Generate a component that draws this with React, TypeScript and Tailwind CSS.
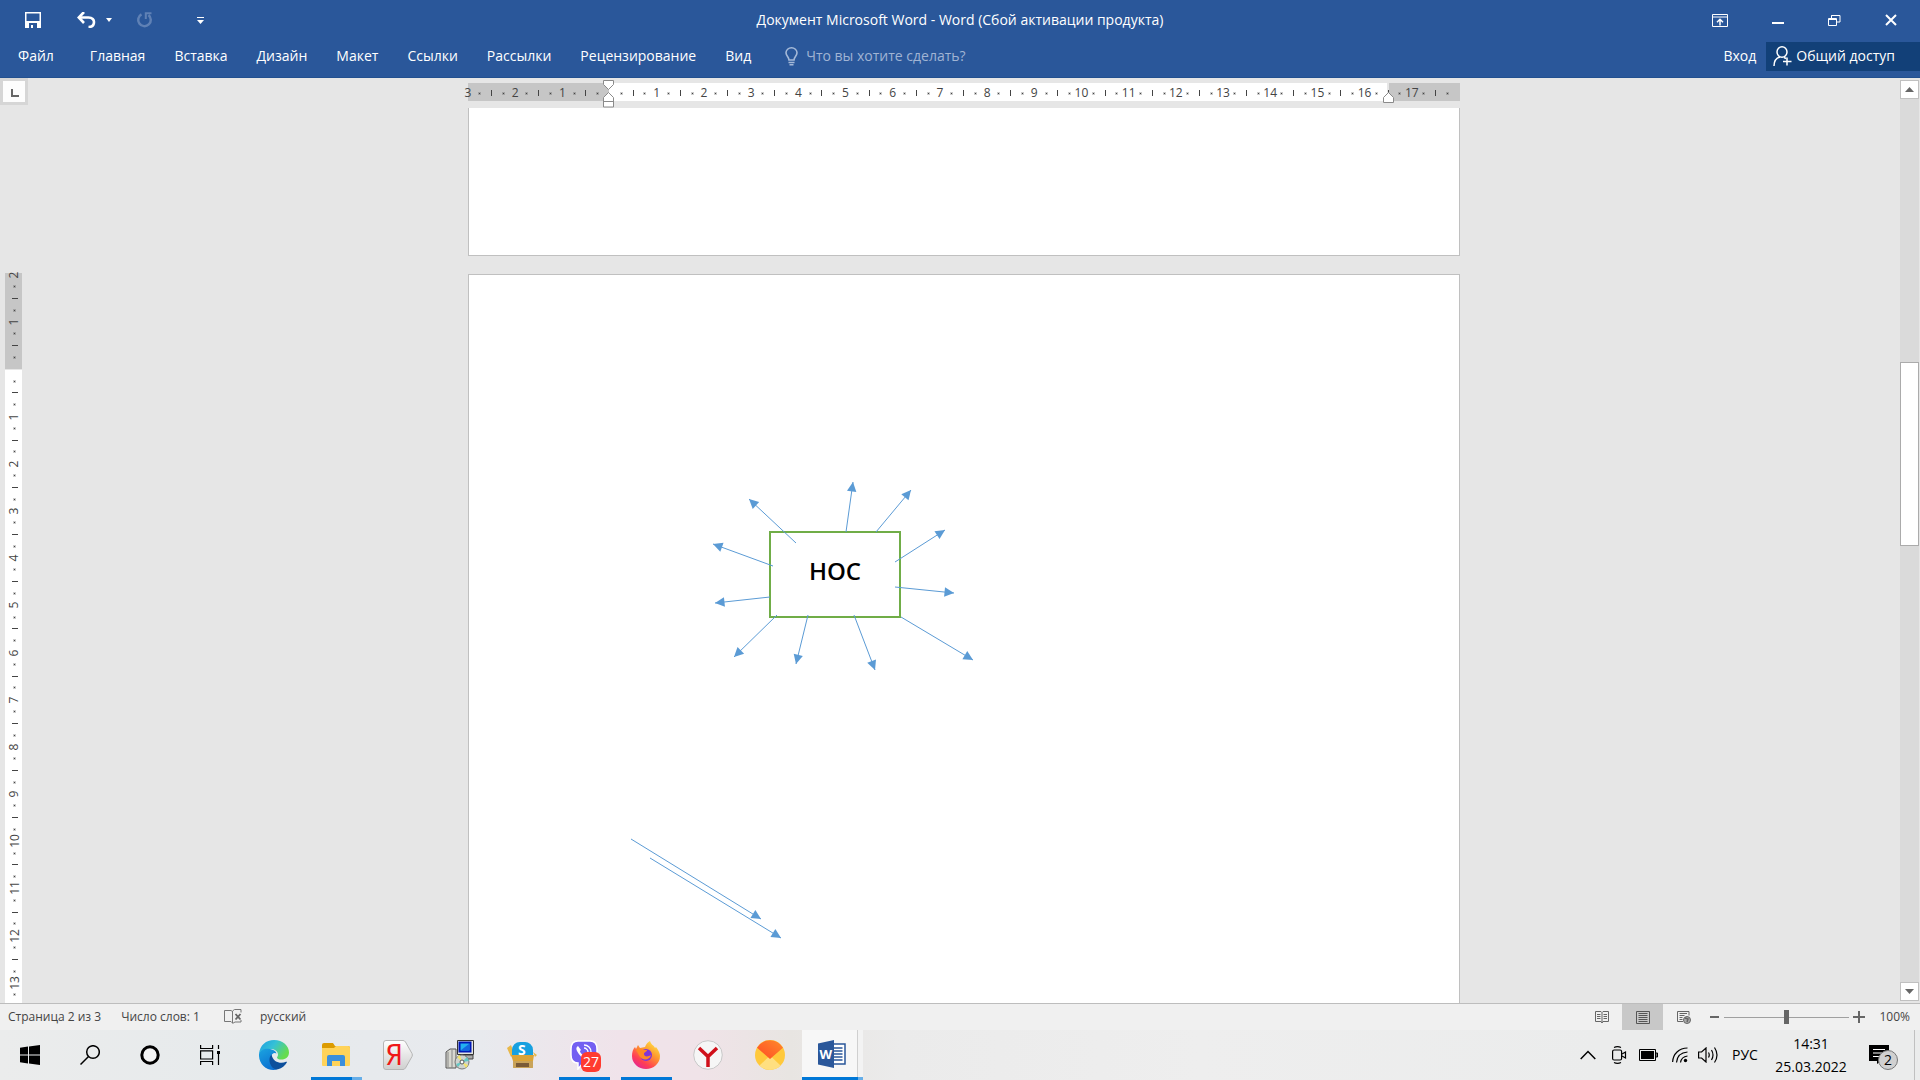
import { useState, type ReactNode } from "react";

type Tick = { kind: "label" | "dot" | "line" | "none"; text?: string };

type Arrow = { from: [number, number]; to: [number, number] };

const TABS = ["Главная", "Вставка", "Дизайн", "Макет", "Ссылки", "Рассылки", "Рецензирование", "Вид"];

const ARROWS: Arrow[] = [
  { from: [327, 268], to: [280, 224] },
  { from: [304, 291], to: [244, 269] },
  { from: [301, 322], to: [246, 328] },
  { from: [308, 340], to: [265, 382] },
  { from: [339, 340], to: [327, 389] },
  { from: [385, 340], to: [406, 395] },
  { from: [432, 342], to: [504, 385] },
  { from: [426, 312], to: [485, 318] },
  { from: [426, 287], to: [476, 255] },
  { from: [407, 257], to: [442, 215] },
  { from: [377, 257], to: [384, 207] },
  { from: [162, 564], to: [292, 644] },
  { from: [181, 583], to: [312, 663] },
];

// one tick for each quarter of a centimetre
function buildTicks(before: number, total: number): Tick[] {
  return Array.from({ length: total * 4 + 1 }, (_, i) => {
    const quarter = i - before * 4;
    if (quarter === 0 || i === total * 4) return { kind: "none" };
    if (quarter % 4 === 0) return { kind: "label", text: String(Math.abs(quarter / 4)) };
    return { kind: quarter % 2 === 0 ? "line" : "dot" };
  });
}

const H_TICKS = buildTicks(3, 21);
const V_TICKS = buildTicks(2, 15.5);

export default function App() {
  return (
    <div className="flex h-screen flex-col overflow-hidden bg-[#e6e6e6] font-['Open_Sans','Noto_Sans',sans-serif]">
      <Header />
      <Workspace />
      <StatusBar />
      <Taskbar />
    </div>
  );
}

function Header() {
  return (
    <header className="h-[78px] shrink-0 border-b border-[#22508f] bg-[#2a579a] text-sm text-white">
      <div className="grid h-10 grid-cols-[1fr_auto_1fr] items-center">
        <div className="flex items-center pl-[25px]">
          <button aria-label="Сохранить">
            <svg width="16" height="16" viewBox="0 0 16 16">
              <path d="M0 0h16v16H0z M1.5 1.5v7.5h13V1.5z M4 11v5h2v-3h2v3h4v-5z" fill="#fff" fillRule="evenodd" />
            </svg>
          </button>
          <button aria-label="Отменить" className="ml-9">
            <svg width="19" height="16" viewBox="0 0 19 16" fill="none">
              <path d="M2 5.5h9.5c4 0 5.5 2.500 5.500 4.500 0 3-2 5-5.500 5" stroke="#fff" strokeWidth="2.600" />
              <path d="M7 0L1.800 5.500L7 11" stroke="#fff" strokeWidth="2.600" />
            </svg>
          </button>
          <button aria-label="Список отмены" className="ml-2.5">
            <svg width="6" height="4" viewBox="0 0 6 4"><path d="M0 0h6L3 4z" fill="#fff" /></svg>
          </button>
          <button aria-label="Повторить" className="ml-6">
            <svg width="17" height="16" viewBox="0 0 17 16" fill="none" stroke="#5f81b5" strokeWidth="2.500">
              <path d="M5.500 2.300A6.300 6.300 0 1 0 12.500 3" />
              <path d="M15.500 1.300H9.800V7" strokeWidth="2" />
            </svg>
          </button>
          <button aria-label="Настройка панели" className="ml-11">
            <svg width="7" height="7" viewBox="0 0 7 7" fill="#fff"><path d="M0 0h7v1H0z M0 3h7L3.500 7z" /></svg>
          </button>
        </div>
        <h1 className="text-sm">Документ Microsoft Word - Word (Сбой активации продукта)</h1>
        <div className="flex items-center justify-end gap-11 pr-[23px]">
          <button aria-label="Параметры ленты">
            <svg width="16" height="13" viewBox="0 0 16 13" fill="none" stroke="#fff">
              <path d="M.5.5h15v12H.5z M.5 3h15" />
              <path d="M8 11.500V5.500 M5 8.300L8 5.300L11 8.300" strokeWidth="1.500" />
            </svg>
          </button>
          <button aria-label="Свернуть">
            <svg width="12" height="14" viewBox="0 0 12 14"><path d="M0 9h12v2H0z" fill="#fff" /></svg>
          </button>
          <button aria-label="Восстановить">
            <svg width="13" height="13" viewBox="0 0 13 13" fill="none" stroke="#fff">
              <path d="M.5 4.500h8v7h-8z M.5 5.500h8 M3.500 4V1.500h8.500v6.500H9 M3.500 1.500h8.500" />
            </svg>
          </button>
          <button aria-label="Закрыть">
            <svg width="12" height="12" viewBox="0 0 12 12"><path d="M1 1l10 10M11 1L1 11" stroke="#fff" strokeWidth="2" /></svg>
          </button>
        </div>
      </div>
      <div className="flex h-8 items-center">
        <button className="ml-[18px]">Файл</button>
        <nav className="ml-9 flex gap-[29px]">
          {TABS.map((tab) => (
            <button key={tab}>{tab}</button>
          ))}
        </nav>
        <label className="ml-[34px] flex items-center gap-2">
          <svg width="13" height="19" viewBox="0 0 13 19" fill="none" stroke="#a5b9d8" strokeWidth="1.600">
            <path d="M4 13C4 10 1 9 1 5.800A5.500 5 0 0 1 12 5.800C12 9 9 10 9 13z" />
            <path d="M3.500 15.500h6M4.500 17.800h4" />
          </svg>
          <input
            aria-label="Помощник"
            placeholder="Что вы хотите сделать?"
            className="w-48 bg-transparent outline-none placeholder:text-[#a0b4d4]"
          />
        </label>
        <button className="ml-auto mr-2.5">Вход</button>
        <button className="flex h-[29px] items-center gap-1 bg-[#124078] pl-[7px] pr-[25px]">
          <svg width="19" height="20" viewBox="0 0 19 20" fill="none" stroke="#fff" strokeWidth="1.500">
            <ellipse cx="9" cy="6" rx="5" ry="5.200" />
            <path d="M1 20c0-5 2.500-8 6-9M11 11.500l2 1M14 11.500v8M10 15.500h8.500" />
          </svg>
          Общий доступ
        </button>
      </div>
    </header>
  );
}

function TickMark({ tick, vertical = false }: { tick: Tick; vertical?: boolean }) {
  return (
    <span className={`flex items-center justify-center ${vertical ? "h-0 w-full" : "h-full w-0"}`}>
      {tick.kind === "label" && (
        <span className={`text-xs leading-4 ${vertical ? "-rotate-90" : ""}`}>{tick.text}</span>
      )}
      {tick.kind === "dot" && <span className="size-px shrink-0 bg-[#444] outline outline-[#4444]" />}
      {tick.kind === "line" && (
        <span className={`shrink-0 bg-[#444] ${vertical ? "h-px w-1.5" : "h-1.5 w-px"}`} />
      )}
    </span>
  );
}

function HorizontalRuler() {
  return (
    <div className="flex justify-center pt-[5px]">
      <div className="relative grid h-4 w-[992px] text-[#444]">
        <div className="flex [grid-area:1/1]">
          <div className="w-[141px] bg-[#c6c6c6]" />
          <div className="flex-1 bg-white" />
          <div className="ml-0.5 w-[71px] bg-[#c6c6c6]" />
        </div>
        <div className="flex items-center justify-between pt-0.5 [grid-area:1/1]">
          {H_TICKS.map((tick, i) => (
            <TickMark key={i} tick={tick} />
          ))}
        </div>
        <svg className="absolute -top-[3px] left-[135px]" width="11" height="28" viewBox="0 0 11 28" fill="#fff" stroke="#8a8a8a">
          <path d="M.5.5h10v4L5.500 9.500L.5 4.500z M5.500 12.500L.5 17.500v9.500h10v-9.500z M.5 21.500h10" />
        </svg>
        <svg className="absolute left-[915px] top-[9px]" width="11" height="11" viewBox="0 0 11 11" fill="#fff" stroke="#8a8a8a">
          <path d="M5.500.5L.5 5.500v5h10v-5z" />
        </svg>
      </div>
    </div>
  );
}

function VerticalRuler() {
  return (
    <div className="overflow-hidden pl-[5px] pt-[165px]">
      <div className="grid h-full w-[17px] text-[#444]">
        <div className="flex flex-col [grid-area:1/1]">
          <div className="h-24 bg-[#c6c6c6]" />
          <div className="mt-px flex-1 bg-white" />
        </div>
        <div className="flex h-[734px] flex-col justify-between pl-0.5 pt-0.5 [grid-area:1/1]">
          {V_TICKS.map((tick, i) => (
            <TickMark key={i} tick={tick} vertical />
          ))}
        </div>
      </div>
    </div>
  );
}

function arrowHead({ from, to }: Arrow) {
  const length = Math.hypot(to[0] - from[0], to[1] - from[1]);
  const ux = (to[0] - from[0]) / length;
  const uy = (to[1] - from[1]) / length;
  const bx = to[0] - ux * 9.5;
  const by = to[1] - uy * 9.5;
  return `${to[0]},${to[1]} ${bx - uy * 4.7},${by + ux * 4.7} ${bx + uy * 4.7},${by - ux * 4.7}`;
}

function Diagram() {
  return (
    <>
      <div className="absolute left-[300px] top-64 flex h-[87px] w-[132px] items-center justify-center border-2 border-[#70ad47] bg-white pb-2 text-2xl font-semibold text-black">
        НОС
      </div>
      <svg className="absolute left-0 top-0" width="990" height="728" viewBox="0 0 990 728">
        {ARROWS.map((arrow, i) => (
          <g key={i} fill="#5b9bd5" stroke="none">
            <line x1={arrow.from[0]} y1={arrow.from[1]} x2={arrow.to[0]} y2={arrow.to[1]} stroke="#5b9bd5" />
            <polygon points={arrowHead(arrow)} />
          </g>
        ))}
      </svg>
    </>
  );
}

function ScrollBar() {
  return (
    <div className="row-span-2 flex flex-col pb-0.5 pt-0.5 pr-px">
      <button aria-label="Вверх" className="flex h-[19px] items-center justify-center border border-[#c0c0c0] bg-white">
        <svg width="9" height="5" viewBox="0 0 9 5"><path d="M0 5h9L4.500 0z" fill="#666" /></svg>
      </button>
      <div className="flex-1 bg-[#dadada] pt-[263px]">
        <div className="h-[184px] border border-[#ababab] bg-white" />
      </div>
      <button aria-label="Вниз" className="flex h-[19px] items-center justify-center border border-[#c0c0c0] bg-white">
        <svg width="9" height="5" viewBox="0 0 9 5"><path d="M0 0h9L4.500 5z" fill="#666" /></svg>
      </button>
    </div>
  );
}

function Workspace() {
  return (
    <div className="grid min-h-0 flex-1 grid-cols-[28px_1fr_20px] grid-rows-[30px_minmax(0,1fr)]">
      <div>
        <button aria-label="Табуляция" className="flex h-[27px] w-7 items-center justify-center border-[3px] border-[#d6d6d6] bg-[#fdfdfd] pl-0.5 pt-0.5">
          <svg width="8" height="8" viewBox="0 0 8 8"><path d="M0 0h2v6h6v2H0z" fill="#666" /></svg>
        </button>
      </div>
      <HorizontalRuler />
      <ScrollBar />
      <VerticalRuler />
      <main className="flex flex-col items-center overflow-hidden">
        <section className="h-[148px] w-[992px] shrink-0 border border-t-0 border-[#c0c0c0] bg-white" />
        <section className="relative mt-[18px] h-[1403px] w-[992px] shrink-0 border border-[#c0c0c0] bg-white">
          <Diagram />
        </section>
      </main>
    </div>
  );
}

function StatusBar() {
  const [zoom, setZoom] = useState(100);

  return (
    <footer className="flex h-[27px] shrink-0 items-center border-t border-[#bdbdbd] bg-[#f0f0f0] text-xs text-[#444]">
      <span className="ml-2">Страница 2 из 3</span>
      <span className="ml-5">Число слов: 1</span>
      <button aria-label="Правописание" className="ml-6">
        <svg width="18" height="16" viewBox="0 0 18 16" fill="none" stroke="#777">
          <path d="M8.500 2.500L7 1.500H.5v11H7l1.500 1.500V2l2-1.500H17v3 M17 11v2h-6l-2.500 1.500" />
          <path d="M11.500 5l5 5.500M16.500 5l-5 5.500" strokeWidth="1.800" stroke="#666" />
        </svg>
      </button>
      <button className="ml-[18px]">русский</button>
      <button aria-label="Режим чтения" className="ml-auto flex h-full w-[41px] items-center justify-center">
        <svg width="14" height="13" viewBox="0 0 14 13" fill="none" stroke="#666">
          <path d="M7 1.500L6 .5H.5v10H6l1 1.500l1-1.500h5.500V.5H8z M7 1.500V12 M2 3.500h3.500M2 5.500h3.500M2 7.500h3.500M8.500 3.500H12M8.500 5.500H12M8.500 7.500H12" />
        </svg>
      </button>
      <button aria-label="Разметка страницы" className="flex h-full w-[41px] items-center justify-center bg-[#c8c8c8]">
        <svg width="14" height="13" viewBox="0 0 14 13" fill="none" stroke="#555">
          <path d="M.5.5h13v12H.5z M2.500 2.500h9M2.500 4.500h9M2.500 6.500h9M2.500 8.500h9M2.500 10.500h9" />
        </svg>
      </button>
      <button aria-label="Веб-документ" className="flex h-full w-[41px] items-center justify-center">
        <svg width="14" height="13" viewBox="0 0 14 13" fill="none" stroke="#666">
          <path d="M6 10.500H.5V.5h11.500v4 M2.500 2.500h7.500M2.500 4.500h5M2.500 6.500h3M2.500 8.500h3" />
          <circle cx="10" cy="9" r="3.500" fill="#aaa" />
          <path d="M8 7l3 1l-1 3" strokeWidth="1.500" />
        </svg>
      </button>
      <button aria-label="Уменьшить" className="ml-1.5" onClick={() => setZoom(zoom - 10)}>
        <svg width="10" height="10" viewBox="0 0 10 10"><path d="M0 4h9v2H0z" fill="#666" /></svg>
      </button>
      <input
        type="range"
        aria-label="Масштаб"
        min={0}
        max={200}
        value={zoom}
        onChange={(e) => setZoom(Number(e.target.value))}
        className="mx-1 h-4 w-[125px] appearance-none bg-transparent bg-[linear-gradient(#a0a0a0,#a0a0a0)] bg-[length:100%_1px] bg-center bg-no-repeat [&::-webkit-slider-thumb]:h-3.5 [&::-webkit-slider-thumb]:w-[5px] [&::-webkit-slider-thumb]:appearance-none [&::-webkit-slider-thumb]:bg-[#666]"
      />
      <button aria-label="Увеличить" className="mr-3.5" onClick={() => setZoom(zoom + 10)}>
        <svg width="12" height="12" viewBox="0 0 12 12"><path d="M0 5h5V0h2v5h5v2H7v5H5V7H0z" fill="#666" /></svg>
      </button>
      <output className="mr-2.5">{zoom}%</output>
    </footer>
  );
}

type TaskProps = { label: string; running?: boolean; stacked?: boolean; children: ReactNode };

function Task({ label, running = false, stacked = false, children }: TaskProps) {
  return (
    <button
      aria-label={label}
      className="flex h-full w-[62px] flex-col items-center pt-2.5"
    >
      <span className="relative flex size-[30px] items-center justify-center">{children}</span>
      {running && (
        <span className="mt-auto flex h-[3px] w-[51px] justify-end bg-[#0078d7]">
          {stacked && <span className="w-2.5 bg-[#66aee8]" />}
        </span>
      )}
    </button>
  );
}

function Taskbar() {
  return (
    <div className="flex h-[50px] shrink-0 items-stretch bg-[linear-gradient(90deg,#ebecec_0px,#e6eaec_260px,#e8eaee_480px,#f0e3ea_620px,#f0e3e8_700px,#e8e5e2_790px,#ebebeb_900px,#eeeeee_1200px,#ebecec_1600px)] text-black">
      <button aria-label="Пуск" className="flex w-[60px] items-center justify-center">
        <svg width="20" height="20" viewBox="0 0 20 20"><path d="M0 2.800L8 1.500V9.500H0z M9 1.400L20 0V9.500H9z M0 10.500h8v8L0 17.300z M9 10.500h11V20L9 18.600z" /></svg>
      </button>
      <button aria-label="Поиск" className="flex w-[60px] items-center justify-center">
        <svg width="20" height="20" viewBox="0 0 20 20" fill="none" stroke="#000" strokeWidth="1.500">
          <circle cx="13" cy="7" r="6.300" /><path d="M8.500 11.500L.5 19.500" />
        </svg>
      </button>
      <button aria-label="Кортана" className="flex w-[60px] items-center justify-center">
        <svg width="20" height="20" viewBox="0 0 20 20"><circle cx="10" cy="10" r="8.200" fill="#f4f4f4" stroke="#000" strokeWidth="3" /></svg>
      </button>
      <button aria-label="Представление задач" className="mr-[3px] flex w-[60px] items-center justify-center">
        <svg width="20" height="20" viewBox="0 0 20 20" fill="none" stroke="#000" strokeWidth="1.200">
          <path d="M.6 0v3.500h12V0 M.6 5.800h12v8.200H.6z M.6 20v-3.500h12V20 M18.500 0v4M18.500 9v11" />
          <path d="M17 6h3v3h-3z" fill="#000" stroke="none" />
        </svg>
      </button>

      <Task label="Edge">
        <svg width="30" height="30" viewBox="0 0 30 30">
          <defs>
            <linearGradient id="edge-top" x1="0" y1="0" x2="1" y2=".5">
              <stop offset="0" stopColor="#1b9de2" /><stop offset=".5" stopColor="#35c1d6" /><stop offset="1" stopColor="#66dc4e" />
            </linearGradient>
            <linearGradient id="edge-left" x1="0" y1="0" x2=".6" y2="1">
              <stop offset="0" stopColor="#1ba4e0" /><stop offset="1" stopColor="#0a6ccf" />
            </linearGradient>
          </defs>
          <path d="M0 14C1 5 7 0 15 0c9 0 15 6 15 12.500c0 4.500-3.500 7-7.500 7c-3 0-4.500-1-4.500-1.800c0-.8 1-1.200 1-3.200c0-3-3-5.500-7-5.500C6 9 1 11 0 14z" fill="url(#edge-top)" />
          <path d="M0 14C1 10 6 8 11 9c4 .5 6 2.500 6.500 4.500c-2-1.500-5.500 0-5.500 4.500c0 6 6 9 11 7.500C20 29 17 30 14.500 30C6 30-.5 23 0 14z" fill="url(#edge-left)" />
          <path d="M12.500 14.500c-5 5.500 0 16 6.500 14.800c4-1 7-3.500 8.800-6.800c.4-.9-.3-1-.8-.7c-4.500 2.200-13 1.200-14.500-7.300z" fill="#0c4f9c" />
        </svg>
      </Task>
      <Task label="Проводник" running stacked>
        <svg width="28" height="24" viewBox="0 0 28 24">
          <path d="M0 2Q0 0 2 0h9l2 3h13q2 0 2 2v5H0z" fill="#dc9b00" />
          <path d="M0 5h12l2-2h12q2 0 2 2v17q0 1-1 1H1q-1 0-1-1z" fill="#ffd359" />
          <path d="M5 23V14q0-2 2-2h14q2 0 2 2v9h-5v-5h-8v5z" fill="#3b8fdc" />
        </svg>
      </Task>
      <Task label="Яндекс">
        <svg width="30" height="30" viewBox="0 0 30 30">
          <defs>
            <linearGradient id="ya-bg" x1="0" y1="0" x2="0" y2="1"><stop offset="0" stopColor="#fff" /><stop offset="1" stopColor="#cfcfcf" /></linearGradient>
          </defs>
          <path d="M3 .5h17q1.500 0 2.500 1.500L29 13.500q.8 1.500 0 3L22.500 28q-1 1.500-2.500 1.500H3Q.5 29.500.5 27V3Q.5.5 3 .5z" fill="url(#ya-bg)" stroke="#b5b5b5" />
          <text x="11" y="25" textAnchor="middle" fontSize="28" fontFamily="Liberation Sans Narrow, DejaVu Sans Condensed, Liberation Sans, sans-serif" fill="#f01818">Я</text>
        </svg>
      </Task>
      <Task label="Установщик">
        <svg width="30" height="30" viewBox="0 0 30 30">
          <path d="M1 12l4-3h6v19H1z" fill="#d8d8d0" stroke="#555" />
          <path d="M3 12v15M7 10v18" stroke="#888" />
          <path d="M20 15h8v4h-8z" fill="#aaa" stroke="#444" />
          <path d="M12.500.5h16v14h-16z" fill="#e4e4e0" stroke="#333" />
          <path d="M14.500 2.500h11v9h-11z" fill="#22b0f0" stroke="#0018b8" strokeWidth="2" />
          <path d="M15.500 10.500l9-7v7z" fill="#1468e0" />
          <circle cx="17" cy="22" r="7" fill="#cfd3cf" stroke="#777" />
          <path d="M17 22L12 17l3-2z M17 22l6 3l-2 3z" fill="#f2e36c" />
          <path d="M17 22l5-5l2 4z M17 22l-4 5l-2-3z" fill="#63c7c4" />
          <circle cx="17" cy="22" r="2" fill="#fff" stroke="#555" />
        </svg>
      </Task>
      <Task label="Skype">
        <svg width="30" height="28" viewBox="0 0 30 28">
          <path d="M0 7l4-3l3 8l-3 4z M28 16l2-2l-4-3z" fill="#e8b84a" />
          <path d="M5 15V9a8 8 0 0 1 8-8h4a8 8 0 0 1 9 8v6z" fill="#17a0e0" />
          <text x="11" y="14" fontSize="14" fontWeight="700" fill="#fff">S</text>
          <path d="M4 14h23l-1 6v6q0 1-1 1H7q-1 0-1-1v-6z" fill="#dba437" />
          <path d="M6 20h20v6q0 1-1 1H7q-1 0-1-1z" fill="#c9a35a" />
          <path d="M9 22h13v4H9z" fill="#7a5b38" />
        </svg>
      </Task>
      <Task label="Viber" running>
        <svg width="28" height="30" viewBox="0 0 28 30">
          <path d="M8 1h12q7 0 7 8v6q0 8-7 8h-7l-5 6v-6q-7 0-7-8V9q0-8 7-8z" fill="#7360f2" stroke="#fff" strokeWidth="1.500" />
          <path d="M8 6c-2 1-2 3-1 5c2 4 5 7 9 8l2-3l-3-2l-2 1c-2-1-3-3-3-4l1-1z" fill="#fff" />
          <path d="M14 5c4 0 7 3 7 7M14 8c2 0 4 2 4 4" fill="none" stroke="#fff" strokeWidth="1.300" />
        </svg>
        <span className="absolute left-3 top-3 flex size-5 items-center justify-center rounded-md bg-[#ff3b30] text-sm text-white">27</span>
      </Task>
      <Task label="Firefox" running>
        <svg width="28" height="28" viewBox="0 0 28 28">
          <defs>
            <linearGradient id="fox" x1=".9" y1="0" x2=".2" y2="1">
              <stop offset="0" stopColor="#fff04a" /><stop offset=".4" stopColor="#ff9a2e" /><stop offset=".75" stopColor="#ff3d55" /><stop offset="1" stopColor="#e0259b" />
            </linearGradient>
          </defs>
          <path d="M18 0c1 4 4 4 5 7l1-1c3 4 4 7 4 9a14 13 0 0 1-28 0c0-4 1-7 3-9l1 2l2-4l2 3l5-1c1-3 3-5 5-6z" fill="url(#fox)" />
          <circle cx="14" cy="14" r="6" fill="#8035d8" />
          <path d="M4 9c3-3 6-1 8 0h3c0 2-3 2-3 4c0 3 4 3 7 1c-1 5-8 6-11 2z" fill="#ff8a25" />
        </svg>
      </Task>
      <Task label="Яндекс.Браузер">
        <svg width="30" height="30" viewBox="0 0 30 30">
          <circle cx="15" cy="15" r="14.300" fill="#f6f6f6" stroke="#c8c8c8" />
          <path d="M6 8L15 16.500L24 8M15 15.500V27" fill="none" stroke="#d0101a" strokeWidth="3.500" />
        </svg>
      </Task>
      <Task label="Почта">
        <svg width="30" height="30" viewBox="0 0 30 30">
          <defs>
            <linearGradient id="mail" x1="0" y1="1" x2="1" y2="0"><stop offset="0" stopColor="#ff4b25" /><stop offset="1" stopColor="#ff8a2a" /></linearGradient>
          </defs>
          <circle cx="15" cy="15" r="15" fill="#ffc93c" />
          <path d="M4.500 25.600L15 15.500L25.500 25.600A15 15 0 0 1 4.500 25.600z" fill="#ffdf80" />
          <path d="M2 7.800A15 15 0 0 1 28 7.800L15 19z" fill="url(#mail)" />
        </svg>
      </Task>
      <button aria-label="Word" className="ml-px grid w-[61px] grid-cols-[56px_1fr] grid-rows-[1fr_3px]">
        <span className="flex items-center justify-center border-r border-[#d0d0d0] bg-[#f7f7f7] pl-1">
          <svg width="28" height="28" viewBox="0 0 28 28">
            <path d="M14.500 4h12.500v20H14.500z" fill="#fff" stroke="#2a579a" strokeWidth="1.500" />
            <path d="M16 8h8.500M16 11h8.500M16 14h8.500M16 17h8.500M16 20h8.500" stroke="#2a579a" strokeWidth="1.400" />
            <path d="M0 3.500L16 0v28L0 24.500z" fill="#2a579a" />
            <text x="1.500" y="19" fontSize="13" fontWeight="700" fill="#fff">W</text>
          </svg>
        </span>
        <span className="bg-[#f3f3f3]" />
        <span className="bg-[#0078d7]" />
        <span className="bg-[#66aee8]" />
      </button>

      <div className="ml-auto flex items-center">
        <button aria-label="Скрытые значки" className="mr-4">
          <svg width="16" height="10" viewBox="0 0 16 10"><path d="M.7 9L8 1.500L15.300 9" fill="none" stroke="#000" strokeWidth="1.500" /></svg>
        </button>
        <svg className="mr-3" width="15" height="18" viewBox="0 0 15 18" fill="none" stroke="#000" strokeWidth="1.200">
          <rect x=".6" y="4" width="9" height="10" rx="1.500" />
          <path d="M10 8l3.500-2v6L10 10M2 1.500Q5.500-.2 9 1.500M2 16.500Q5.500 18.200 9 16.500" />
        </svg>
        <svg className="mr-3.5" width="19" height="12" viewBox="0 0 19 12">
          <path d="M.5.500h16v11H.5z M17 4h1.500v4H17z" fill="none" stroke="#000" /><path d="M2 2h13v8H2z" />
        </svg>
        <svg className="mr-2.5" width="16" height="16" viewBox="0 0 16 16" fill="none" stroke="#000" strokeWidth="1.200">
          <path d="M.6 15C1 7 7 1 15.500 1M4.500 15.500C5 9.500 9 5.500 15.500 5M8.500 15.500C9 12 11.500 9.500 15.500 9" />
          <circle cx="13.500" cy="13.500" r="1.700" fill="#000" stroke="none" />
        </svg>
        <svg className="mr-3.5" width="20" height="16" viewBox="0 0 20 16" fill="none" stroke="#000" strokeWidth="1.200">
          <path d="M.6 5h3L8 1v14L3.600 11h-3z M10.500 5.500q1.500 2.500 0 5M13.500 3q3 5 0 10M16.500.500q5 7.500 0 15" />
        </svg>
        <button className="w-[26px] text-sm">РУС</button>
        <div className="ml-[18px] flex w-[70px] flex-col items-center whitespace-nowrap text-sm leading-[23px]">
          <time>14:31</time>
          <time>25.03.2022</time>
        </div>
        <button aria-label="Уведомления" className="relative ml-[23px] mr-3.5 h-[30px] w-[31px]">
          <svg width="20" height="20" viewBox="0 0 20 20"><path d="M0 0h20v16h-8l-4 3v-3H0z" /><path d="M4 4.500h12M4 8h12M4 11.500h8" stroke="#fff" strokeWidth="1.200" /></svg>
          <span className="absolute bottom-0 right-0.5 flex size-5 items-center justify-center rounded-full border border-[#777] bg-[#d0d0d0] text-sm">2</span>
        </button>
        <span className="h-full w-1.5 border-l border-[#c0c0c0]" />
      </div>
    </div>
  );
}
